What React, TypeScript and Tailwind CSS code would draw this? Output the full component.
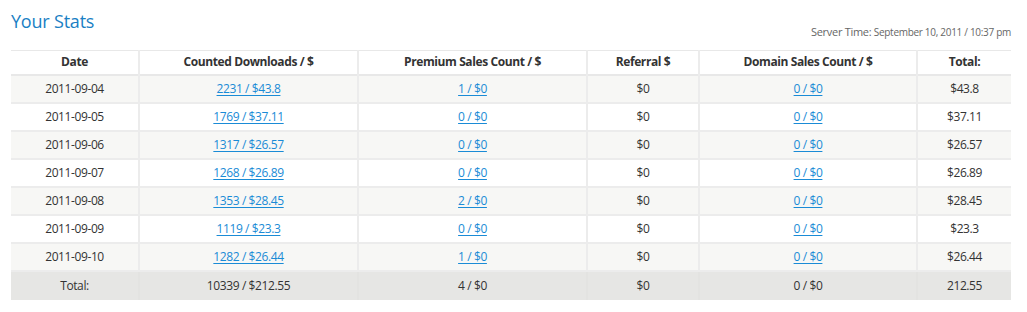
import React from "react";

type Row = {
  date: string;
  downloads: string;
  premium: string;
  referral: string;
  domain: string;
  total: string;
};

const ROWS: Row[] = [
  { date: "2011-09-04", downloads: "2231 / $43.8", premium: "1 / $0", referral: "$0", domain: "0 / $0", total: "$43.8" },
  { date: "2011-09-05", downloads: "1769 / $37.11", premium: "0 / $0", referral: "$0", domain: "0 / $0", total: "$37.11" },
  { date: "2011-09-06", downloads: "1317 / $26.57", premium: "0 / $0", referral: "$0", domain: "0 / $0", total: "$26.57" },
  { date: "2011-09-07", downloads: "1268 / $26.89", premium: "0 / $0", referral: "$0", domain: "0 / $0", total: "$26.89" },
  { date: "2011-09-08", downloads: "1353 / $28.45", premium: "2 / $0", referral: "$0", domain: "0 / $0", total: "$28.45" },
  { date: "2011-09-09", downloads: "1119 / $23.3", premium: "0 / $0", referral: "$0", domain: "0 / $0", total: "$23.3" },
  { date: "2011-09-10", downloads: "1282 / $26.44", premium: "1 / $0", referral: "$0", domain: "0 / $0", total: "$26.44" },
];

const HEADERS = ["Date", "Counted Downloads / $", "Premium Sales Count / $", "Referral $", "Domain Sales Count / $", "Total:"];
const WIDTHS = ["w-[128px]", "w-[219px]", "w-[229px]", "w-[112px]", "w-[218px]", "w-[94px]"];

function Link({ children }: { children: React.ReactNode }) {
  return <a href="#" className="text-[#1a8bd6] underline underline-offset-2">{children}</a>;
}

export default function App() {
  return (
    <div className="bg-white px-[11px] pt-[9px] font-['Open_Sans',sans-serif] text-[12px] tracking-[-0.4px] text-[#333]">
      <div className="flex w-[1000px] items-end justify-between">
        <h1 className="text-[18px] font-normal leading-[24px] tracking-[-0.2px] text-[#1a7fc4]">Your Stats</h1>
        <p className="mb-[-7px] text-[11px] tracking-[-0.3px] text-[#666]">
          Server Time: <span className="text-[10px]">September 10, 2011 / 10:37 pm</span>
        </p>
      </div>

      <table className="mt-[17px] w-[1000px] table-fixed border-collapse">
        <colgroup>
          {WIDTHS.map((w, i) => (
            <col key={i} className={w} />
          ))}
        </colgroup>
        <thead>
          <tr className="h-[24px] border-t border-b-2 border-[#e8e8e8]">
            {HEADERS.map((h, i) => (
              <th
                key={h}
                className={`text-center font-bold ${i > 0 ? "border-l-2 border-[#ececec]" : ""}`}
              >
                {h}
              </th>
            ))}
          </tr>
        </thead>
        <tbody>
          {ROWS.map((r, idx) => (
            <tr key={r.date} className={`h-[28px] border-b-2 border-[#ececec] ${idx % 2 === 0 ? "bg-[#f7f7f5]" : "bg-white"}`}>
              <td className="text-center">{r.date}</td>
              <td className="border-l-2 border-[#ececec] text-center"><Link>{r.downloads}</Link></td>
              <td className="border-l-2 border-[#ececec] text-center"><Link>{r.premium}</Link></td>
              <td className="border-l-2 border-[#ececec] text-center">{r.referral}</td>
              <td className="border-l-2 border-[#ececec] text-center"><Link>{r.domain}</Link></td>
              <td className="border-l-2 border-[#ececec] text-center">{r.total}</td>
            </tr>
          ))}
          <tr className="h-[29px] bg-[#e6e6e4]">
            <td className="text-center">Total:</td>
            <td className="border-l-2 border-[#e3e3e1] text-center">10339 / $212.55</td>
            <td className="border-l-2 border-[#e3e3e1] text-center">4 / $0</td>
            <td className="border-l-2 border-[#e3e3e1] text-center">$0</td>
            <td className="border-l-2 border-[#e3e3e1] text-center">0 / $0</td>
            <td className="border-l-2 border-[#e3e3e1] text-center">212.55</td>
          </tr>
        </tbody>
      </table>
    </div>
  );
}
